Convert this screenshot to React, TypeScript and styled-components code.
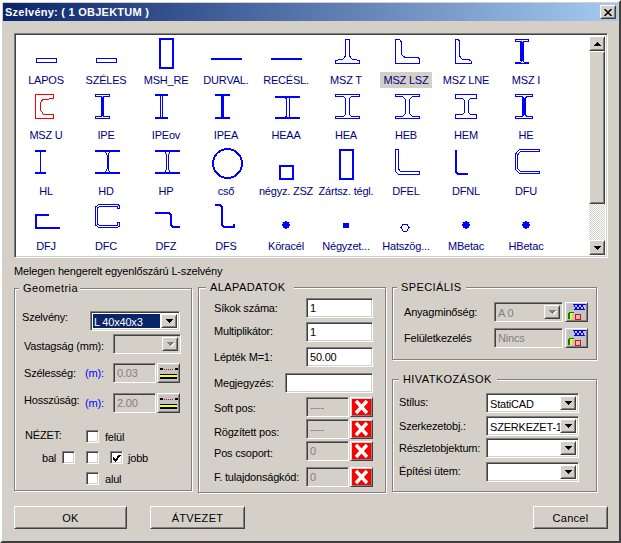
import React from "react";
import styled, { createGlobalStyle } from "styled-components";

const Global = createGlobalStyle`
  html, body { margin: 0; padding: 0; background: #d4d0c8; }
  * { box-sizing: border-box; }
`;

const sunken = `
  border: 1px solid;
  border-color: #808080 #fff #fff #808080;
  box-shadow: inset 1px 1px #404040, inset -1px -1px #d4d0c8;
`;
const raised = `
  border: 1px solid;
  border-color: #fff #404040 #404040 #fff;
  box-shadow: inset 1px 1px #d4d0c8, inset -1px -1px #808080;
  background: #d4d0c8;
`;

const Window = styled.div`
  width: 621px;
  height: 543px;
  display: flex;
  flex-direction: column;
  padding: 1px;
  background: #d4d0c8;
  border: 2px solid;
  border-color: #fff #404040 #404040 #fff;
  font: 11px/14px "Liberation Sans", Arial, sans-serif;
  letter-spacing: -0.2px;
  color: #000;
  overflow: hidden;
`;
const TitleBar = styled.div`
  height: 18px;
  flex: none;
  display: flex;
  align-items: center;
  justify-content: space-between;
  padding: 0 2px;
  background: linear-gradient(90deg, #0a246a, #a6caf0);
  color: #fff;
  font-weight: bold;
  font-size: 11px;
  letter-spacing: 0.25px;
`;
const CloseButton = styled.button`
  ${raised}
  width: 16px;
  height: 14px;
  padding: 0;
  display: flex;
  align-items: center;
  justify-content: center;
`;
const Body = styled.div`
  flex: 1;
  display: flex;
  flex-direction: column;
  padding: 12px 0 0 11px;
`;
const ListFrame = styled.div`
  ${sunken}
  width: 594px;
  height: 225px;
  flex: none;
  padding: 2px;
  background: #fff;
  display: flex;
`;
const ProfileGrid = styled.div`
  flex: 1;
  margin-left: -1px;
  display: grid;
  grid-template-columns: repeat(9, 60px);
  grid-auto-rows: 55.33px;
`;
const ProfileCell = styled.div`
  display: flex;
  flex-direction: column;
  align-items: center;
  color: #000080;
`;
const ProfileIcon = styled.svg`
  width: 60px;
  height: 36px;
  flex: none;
  overflow: visible;
  display: block;
`;
const ProfileLabel = styled.span<{ $sel?: boolean }>`
  height: 16px;
  line-height: 16px;
  padding: 0 3px;
  white-space: nowrap;
  background: ${(p) => (p.$sel ? "#d4d0c8" : "transparent")};
`;
const ScrollBar = styled.div`
  width: 16px;
  flex: none;
  display: flex;
  flex-direction: column;
`;
const ScrollBtn = styled.div`
  ${raised}
  height: 15px;
  flex: none;
  display: flex;
  align-items: center;
  justify-content: center;
`;
const ScrollThumb = styled.div`
  ${raised}
  height: 153px;
  flex: none;
`;
const ScrollTrack = styled.div`
  flex: 1;
  background: repeating-conic-gradient(#d4d0c8 0 25%, #fff 0 50%) 0 0 / 2px 2px;
`;
const Description = styled.div`
  height: 14px;
  margin: 6px 0 9px 0;
  flex: none;
  letter-spacing: -0.17px;
`;
const Columns = styled.div`
  display: flex;
  align-items: flex-start;
  gap: 6px;
  flex: none;
`;
const Stack = styled.div`
  display: flex;
  flex-direction: column;
  gap: 19px;
`;
const Group = styled.div<{ $w: number; $h: number; $mt?: number }>`
  position: relative;
  width: ${(p) => p.$w}px;
  height: ${(p) => p.$h}px;
  margin-top: ${(p) => p.$mt ?? 0}px;
  border: 1px solid #808080;
  box-shadow: inset 1px 1px #fff, 1px 1px #fff;
`;
const Legend = styled.span<{ $left: number; $pr: number }>`
  position: absolute;
  left: ${(p) => p.$left}px;
  top: -8px;
  padding: 0 ${(p) => p.$pr}px 0 4px;
  background: #d4d0c8;
  white-space: nowrap;
  letter-spacing: 0.4px;
`;
const Row = styled.div<{ $mt: number }>`
  display: flex;
  align-items: center;
  height: 20px;
  margin-top: ${(p) => p.$mt}px;
`;
const Label = styled.span<{ $ml: number; $w: number; $dy?: number }>`
  margin-left: ${(p) => p.$ml}px;
  width: ${(p) => p.$w}px;
  flex: none;
  white-space: nowrap;
  position: relative;
  top: ${(p) => p.$dy ?? 0}px;
`;
const Unit = styled.span`
  width: 28px;
  flex: none;
  color: #0000ff;
`;
const Input = styled.div<{ $w: number; $off?: boolean }>`
  ${sunken}
  width: ${(p) => p.$w}px;
  height: 20px;
  flex: none;
  padding: 2px 0 0 3px;
  line-height: 14px;
  background: ${(p) => (p.$off ? "#d4d0c8" : "#fff")};
  color: ${(p) => (p.$off ? "#808080" : "#000")};
  white-space: nowrap;
  overflow: hidden;
`;
const Combo = styled.div<{ $w: number; $off?: boolean }>`
  ${sunken}
  width: ${(p) => p.$w}px;
  height: 20px;
  flex: none;
  display: flex;
  padding: 2px;
  background: ${(p) => (p.$off ? "#d4d0c8" : "#fff")};
  color: ${(p) => (p.$off ? "#808080" : "#000")};
`;
const ComboText = styled.div<{ $sel?: boolean }>`
  flex: 1;
  min-width: 0;
  padding-left: 1px;
  line-height: 16px;
  white-space: nowrap;
  margin-right: 1px;
  background: ${(p) => (p.$sel ? "#0a246a" : "transparent")};
  color: ${(p) => (p.$sel ? "#fff" : "inherit")};
`;
const ComboBtn = styled.div`
  ${raised}
  position: relative;
  width: 16px;
  flex: none;
  display: flex;
  align-items: center;
  justify-content: center;
`;
const ToolBtn = styled.div<{ $ml: number }>`
  ${raised}
  width: 23px;
  height: 20px;
  flex: none;
  margin-left: ${(p) => p.$ml}px;
  display: flex;
  align-items: center;
  justify-content: center;
`;
const ViewGrid = styled.div`
  margin-top: 17px;
  display: grid;
  grid-template-columns: 27px 20px 24px 19px 5px 18px 1fr;
  grid-auto-rows: 13px;
  row-gap: 8px;
  align-items: center;
`;
const ViewTitle = styled.span`
  grid-column: 1 / 4;
  padding-left: 10px;
  position: relative;
  top: -2px;
`;
const ViewText = styled.span<{ $col: string }>`
  grid-column: ${(p) => p.$col};
`;
const Check = styled.div<{ $col: number }>`
  ${sunken}
  grid-column: ${(p) => p.$col};
  width: 13px;
  height: 13px;
  background: #fff;
  display: flex;
  align-items: center;
  justify-content: center;
`;
const Footer = styled.div`
  display: flex;
  margin-top: 13px;
  width: 594px;
`;
const PushButton = styled.div<{ $w: number; $ml?: string }>`
  ${raised}
  width: ${(p) => p.$w}px;
  height: 23px;
  margin-left: ${(p) => p.$ml ?? "0"};
  display: flex;
  align-items: center;
  justify-content: center;
  letter-spacing: 0.3px;
`;

const B = "#0000ff";

const Outline = ({ d, color = B }: { d: string; color?: string }) => (
  <path d={d} fill="none" stroke={color} strokeWidth={1} />
);
const Bold = ({ d }: { d: string }) => <path d={d} fill="none" stroke={B} strokeWidth={2} />;

const Beam = ({
  x0, x1, top = 3.5, bot = 27.5, tf = 3, tw = 1.5, r = 2,
}: { x0: number; x1: number; top?: number; bot?: number; tf?: number; tw?: number; r?: number }) => {
  const c = Math.floor((x0 + x1) / 2) + 0.5;
  const a = top + tf;
  const b = bot - tf;
  const d = `M${x0} ${top}H${x1}V${a}H${c + tw + r}L${c + tw} ${a + r}V${b - r}L${c + tw + r} ${b}H${x1}V${bot}H${x0}V${b}H${c - tw - r}L${c - tw} ${b - r}V${a + r}L${c - tw - r} ${a}H${x0}Z`;
  return <Outline d={d} />;
};
const Dot = () => (
  <>
    <circle cx={30} cy={23} r={3.6} fill={B} />
    <rect x={26} y={20} width={1} height={1} fill="#8080ff" />
    <rect x={33} y={20} width={1} height={1} fill="#8080ff" />
  </>
);

const profiles: { label: string; icon: React.ReactNode; sel?: boolean }[] = [
  { label: "LAPOS", icon: <Outline d="M20.5 22.5H40.5V26.5H20.5Z" /> },
  { label: "SZÉLES", icon: <Outline d="M20.5 22.5H40.5V26.5H20.5Z" /> },
  { label: "MSH_RE", icon: <Bold d="M24 3H37V32H24Z" /> },
  { label: "DURVAL.", icon: <Bold d="M15 23H46" /> },
  { label: "RECÉSL.", icon: <Bold d="M15 23H46" /> },
  { label: "MSZ T", icon: <Outline d="M29.5 3.5H33.5V20L36 23L43.5 24.5V27.5H19.5V24.5L27 23L29.5 20Z" /> },
  { label: "MSZ LSZ", sel: true, icon: <Outline d="M19.5 3.5H23.5L25 5.5V18L29 21.5H42L43.5 23V27.5H19.5Z" /> },
  { label: "MSZ LNE", icon: <Outline d="M19.5 3.5H22L23.5 5V20L26.5 23.5H33L35.5 25.5V27.5H19.5Z" /> },
  { label: "MSZ I", icon: <><Beam x0={19.5} x1={32.5} tf={1.5} tw={0.5} r={1} /><path d="M25 6V25" stroke={B} strokeWidth={3} /></> },
  { label: "MSZ U", icon: <Outline color="#ff0000" d="M37.5 3.5H19.5V27.5H37.5V24L33 23H27L24 18V13L27 8H33L37.5 7Z" /> },
  { label: "IPE", icon: <><Beam x0={19.5} x1={33.5} tf={2} tw={0.5} r={1} /><path d="M26.5 6V25" stroke={B} strokeWidth={3} /></> },
  { label: "IPEov", icon: <><Beam x0={19.5} x1={31.5} tf={1} tw={1} r={1} /><path d="M19 3.5H32M19 27H32" stroke={B} strokeWidth={2} /></> },
  { label: "IPEA", icon: <><Beam x0={19.5} x1={33.5} tf={1} tw={0.5} r={1} /><path d="M19 4H34M19 27H34" stroke={B} strokeWidth={2} /><path d="M26.5 6V25" stroke={B} strokeWidth={3} /></> },
  { label: "HEAA", icon: <><Beam x0={19.5} x1={43.5} top={5.5} tf={1} tw={1.5} r={1} /><path d="M19 6H44M19 27H44" stroke={B} strokeWidth={2} /></> },
  { label: "HEA", icon: <Beam x0={19.5} x1={43.5} tf={2} tw={2} r={2} /> },
  { label: "HEB", icon: <Beam x0={19.5} x1={43.5} tf={2} tw={2} r={3} /> },
  { label: "HEM", icon: <Beam x0={19.5} x1={40.5} tf={4} tw={2} r={2} /> },
  { label: "HE", icon: <><Beam x0={19.5} x1={36.5} tf={2} tw={0.5} r={2} /><path d="M27.5 7V24" stroke={B} strokeWidth={3} /></> },
  { label: "HL", icon: <><path d="M19 3.5H30M19 26H30" stroke={B} strokeWidth={2} /><path d="M24.5 3V27" stroke={B} strokeWidth={1} /></> },
  { label: "HD", icon: <><path d="M19 3.5H44M19 26H44" stroke={B} strokeWidth={2} /><Outline d="M29.5 5L31 8V22L29.5 25M33.5 5L32 8V22L33.5 25" /></> },
  { label: "HP", icon: <><path d="M19 3.5H44M19 26H44" stroke={B} strokeWidth={2} /><Outline d="M29 5L30.5 8V22L29 25M34 5L32.5 8V22L34 25" /></> },
  { label: "cső", icon: <circle cx={31.5} cy={16.5} r={14.5} fill="none" stroke={B} strokeWidth={2} /> },
  { label: "négyz. ZSZ", icon: <Bold d="M24 18.5H37V31.5H24Z" /> },
  { label: "Zártsz. tégl.", icon: <Bold d="M24 2.5H37V31.5H24Z" /> },
  { label: "DFEL", icon: <Outline d="M19.5 2.5H22.5V22L24.5 24.5H43.5V27.5H22.5L19.5 24.5Z" /> },
  { label: "DFNL", icon: <Bold d="M20 2.5V25L21.5 26.5H32" /> },
  { label: "DFU", icon: <Outline d="M43.5 2.5H23.5L19.5 7V22.5L23.5 26.5H43.5V24.5H24.5L21.5 21.5V8L24.5 4.5H43.5Z" /> },
  { label: "DFJ", icon: <Bold d="M33 13H20V26H44" /> },
  { label: "DFC", icon: <Outline d="M43.5 6.5V3.5L41.5 2.5H22.5L19.5 5V23L22.5 25.5H41.5L43.5 24V20.5H41.5V23.5H23.5L21.5 22V6L23.5 4.5H41.5V6.5Z" /> },
  { label: "DFZ", icon: <Bold d="M19 11H33L35 13V23L37 25H44" /> },
  { label: "DFS", icon: <Bold d="M19 3H24L26 5V23L28 25H38V22" /> },
  { label: "Köracél", icon: <Dot /> },
  { label: "Négyzet...", icon: <rect x={27} y={20.5} width={5.5} height={5.5} fill={B} /> },
  { label: "Hatszög...", icon: <path d="M25 25.5L27 22.5H31L33 25.5L31 29H27Z" fill="none" stroke={B} strokeWidth={1} /> },
  { label: "MBetac", icon: <Dot /> },
  { label: "HBetac", icon: <Dot /> },
];

const Arrow = ({ down = true, off = false }: { down?: boolean; off?: boolean }) => (
  <svg width={9} height={6} viewBox="0 0 9 6" shapeRendering="crispEdges">
    {off && <path d={down ? "M2 2H9L5.5 6Z" : "M5 1L9 6H1Z"} fill="#fff" />}
    <path d={down ? "M1 1H8L4.5 5Z" : "M4.5 1L8 5H1Z"} fill={off ? "#808080" : "#000"} />
  </svg>
);
const RulerIcon = () => (
  <svg width={19} height={16} viewBox="0 0 19 16" shapeRendering="crispEdges">
    <rect width={19} height={16} fill="#c4c4c4" />
    <path d="M1 3H4V5H1ZM16 3H19V5H16Z" fill="#000" />
    <path d="M5 4H15" stroke="#d00000" strokeWidth={1} strokeDasharray="1 1" />
    <rect x={1} y={9} width={17} height={1} fill="#000" />
    <rect x={1} y={10} width={17} height={2} fill="#ffff00" />
    <rect x={1} y={12} width={17} height={2} fill="#000" />
  </svg>
);
const CrossIcon = () => (
  <svg width={19} height={16} viewBox="0 0 19 16">
    <rect width={19} height={16} fill="#ff0000" />
    <path d="M4 2L15 14M15 2L4 14" stroke="#fff" strokeWidth={3.4} />
  </svg>
);
const MaterialIcon = () => (
  <svg width={19} height={16} viewBox="0 0 19 16" shapeRendering="crispEdges">
    <rect width={19} height={16} fill="#c4c4c4" />
    <path d="M6 0.5H19M7 5.5H18" stroke="#0000ff" strokeWidth={1} />
    <path d="M7 1L9 5L11 1L13 5L15 1L17 5" fill="none" stroke="#0000ff" strokeWidth={1} />
    <path d="M3 15V9L7 7.5V9L5 10V15Z" fill="#ffff00" />
    <path d="M1 15V9L3 8V15Z" fill="#008000" />
    <path d="M7 9V8H3V9Z" fill="#008000" />
    <rect x={8.5} y={10.5} width={5} height={5} fill="none" stroke="#ff0000" strokeWidth={1.4} />
  </svg>
);
const Tick = () => (
  <svg width={9} height={8} viewBox="0 0 9 8" shapeRendering="crispEdges">
    <path d="M1 3.5L3.5 6.5L8 1" fill="none" stroke="#000" strokeWidth={2} />
  </svg>
);

const ComboBox = ({ w, text, off, sel }: { w: number; text?: string; off?: boolean; sel?: boolean }) => (
  <Combo $w={w} $off={off}>
    <ComboText $sel={sel}>{text}</ComboText>
    <ComboBtn><Arrow off={off} /></ComboBtn>
  </Combo>
);

export default function App() {
  return (
    <Window>
      <Global />
      <TitleBar>
        <span>Szelvény: ( 1 OBJEKTUM )</span>
        <CloseButton>
          <svg width={8} height={7} viewBox="0 0 8 7">
            <path d="M0.5 0L7.5 7M7.5 0L0.5 7" stroke="#000" strokeWidth={1.5} />
          </svg>
        </CloseButton>
      </TitleBar>
      <Body>
        <ListFrame>
          <ProfileGrid>
            {profiles.map((p) => (
              <ProfileCell key={p.label}>
                <ProfileIcon viewBox="0 0 60 36" shapeRendering="crispEdges">{p.icon}</ProfileIcon>
                <ProfileLabel $sel={p.sel}>{p.label}</ProfileLabel>
              </ProfileCell>
            ))}
          </ProfileGrid>
          <ScrollBar>
            <ScrollBtn><Arrow down={false} /></ScrollBtn>
            <ScrollThumb />
            <ScrollTrack />
            <ScrollBtn><Arrow /></ScrollBtn>
          </ScrollBar>
        </ListFrame>
        <Description>Melegen hengerelt egyenlőszárú L-szelvény</Description>
        <Columns>
          <Group $w={178} $h={203} $mt={1}>
            <Legend $left={4} $pr={2}>Geometria</Legend>
            <Row $mt={22}>
              <Label $ml={7} $w={68} $dy={-4}>Szelvény:</Label>
              <ComboBox w={90} text="L 40x40x3" sel />
            </Row>
            <Row $mt={3}>
              <Label $ml={9} $w={89} $dy={2}>Vastagság (mm):</Label>
              <ComboBox w={68} off />
            </Row>
            <Row $mt={9}>
              <Label $ml={9} $w={61}>Szélesség:</Label>
              <Unit>(m):</Unit>
              <Input $w={43} $off>0.03</Input>
              <ToolBtn $ml={1}><RulerIcon /></ToolBtn>
            </Row>
            <Row $mt={10}>
              <Label $ml={9} $w={61} $dy={-3}>Hosszúság:</Label>
              <Unit>(m):</Unit>
              <Input $w={43} $off>2.00</Input>
              <ToolBtn $ml={1}><RulerIcon /></ToolBtn>
            </Row>
            <ViewGrid>
              <ViewTitle>NÉZET:</ViewTitle>
              <Check $col={4} />
              <ViewText $col="5 / 8">felül</ViewText>
              <ViewText $col="2">bal</ViewText>
              <Check $col={3} />
              <Check $col={4} />
              <Check $col={6}><Tick /></Check>
              <ViewText $col="7">jobb</ViewText>
              <Check $col={4} />
              <ViewText $col="5 / 8">alul</ViewText>
            </ViewGrid>
          </Group>
          <Group $w={188} $h={206}>
            <Legend $left={7} $pr={8}>ALAPADATOK</Legend>
            <Row $mt={10}><Label $ml={15} $w={92}>Síkok száma:</Label><Input $w={67}>1</Input></Row>
            <Row $mt={4}><Label $ml={15} $w={92} $dy={-1}>Multiplikátor:</Label><Input $w={67}>1</Input></Row>
            <Row $mt={5}><Label $ml={15} $w={92}>Lépték M=1:</Label><Input $w={67}>50.00</Input></Row>
            <Row $mt={6}><Label $ml={15} $w={71}>Megjegyzés:</Label><Input $w={88} /></Row>
            <Row $mt={4}>
              <Label $ml={15} $w={92} $dy={1}>Soft pos:</Label>
              <Input $w={43} $off>----</Input>
              <ToolBtn $ml={1}><CrossIcon /></ToolBtn>
            </Row>
            <Row $mt={2}>
              <Label $ml={15} $w={92} $dy={3}>Rögzített pos:</Label>
              <Input $w={43} $off>----</Input>
              <ToolBtn $ml={1}><CrossIcon /></ToolBtn>
            </Row>
            <Row $mt={2}>
              <Label $ml={15} $w={92} $dy={2}>Pos csoport:</Label>
              <Input $w={43} $off>0</Input>
              <ToolBtn $ml={1}><CrossIcon /></ToolBtn>
            </Row>
            <Row $mt={6}>
              <Label $ml={15} $w={92}>F. tulajdonságkód:</Label>
              <Input $w={43} $off>0</Input>
              <ToolBtn $ml={1}><CrossIcon /></ToolBtn>
            </Row>
          </Group>
          <Stack>
            <Group $w={205} $h={73}>
              <Legend $left={4} $pr={5}>SPECIÁLIS</Legend>
              <Row $mt={14}>
                <Label $ml={11} $w={90}>Anyagminőség:</Label>
                <ComboBox w={69} text="A 0" off />
                <ToolBtn $ml={2}><MaterialIcon /></ToolBtn>
              </Row>
              <Row $mt={6}>
                <Label $ml={11} $w={90}>Felületkezelés</Label>
                <Input $w={69} $off>Nincs</Input>
                <ToolBtn $ml={2}><MaterialIcon /></ToolBtn>
              </Row>
            </Group>
            <Group $w={205} $h={113}>
              <Legend $left={6} $pr={5}>HIVATKOZÁSOK</Legend>
              <Row $mt={13}><Label $ml={6} $w={87} $dy={-1}>Stílus:</Label><ComboBox w={93} text="StatiCAD" /></Row>
              <Row $mt={3}><Label $ml={6} $w={87}>Szerkezetobj.:</Label><ComboBox w={93} text="SZERKEZET-1" /></Row>
              <Row $mt={2}><Label $ml={6} $w={87}>Részletobjektum:</Label><ComboBox w={93} /></Row>
              <Row $mt={4}><Label $ml={6} $w={87} $dy={-1}>Építési ütem:</Label><ComboBox w={93} /></Row>
            </Group>
          </Stack>
        </Columns>
        <Footer>
          <PushButton $w={113}>OK</PushButton>
          <PushButton $w={95} $ml="23px">ÁTVEZET</PushButton>
          <PushButton $w={75} $ml="auto">Cancel</PushButton>
        </Footer>
      </Body>
    </Window>
  );
}
